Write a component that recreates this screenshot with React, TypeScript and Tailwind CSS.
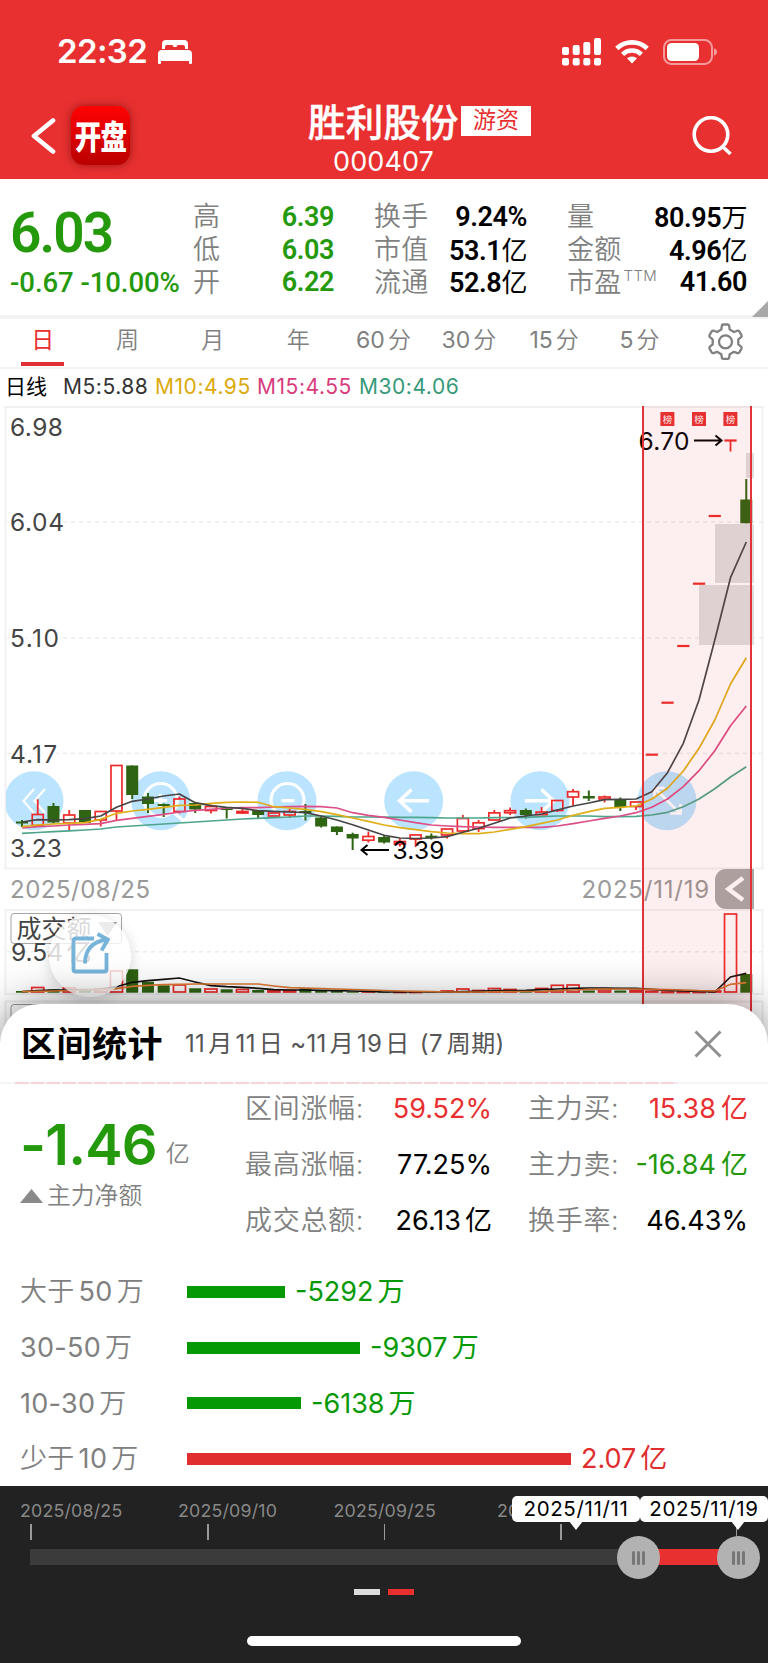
// ─── Chart constants ─────────────────────────────────────────────────────
const STEP = 15.745;
const X0 = 22;
const RED = "#ee2b2b";
const GREEN = "#2f6412";

const cx = (i: number) => X0 + i * STEP;

// direction, high, body top, body bottom, low
type Candle = ["r" | "g", number, number, number, number];

const CANDLES: Candle[] = [
  ["g", 820, 821.5, 823.5, 827],
  ["r", 799.3, 814.5, 825.5, 825.5],
  ["g", 803, 806, 822.5, 823.5],
  ["r", 810, 815, 823, 830],
  ["g", 810, 810, 823, 823],
  ["r", 811.5, 811.5, 820, 826.5],
  ["r", 765.5, 765.5, 811, 821],
  ["g", 765.5, 765.5, 795, 799],
  ["g", 793, 796.5, 804, 813],
  ["g", 803.5, 804, 806, 817],
  ["r", 796.5, 799, 811.5, 813.5],
  ["g", 803, 803, 809.5, 813],
  ["r", 804.5, 806.5, 810.5, 813.5],
  ["g", 808, 808.5, 810, 818.5],
  ["r", 808.7, 811.5, 813, 814],
  ["g", 810, 810, 815, 818.5],
  ["r", 813, 813, 816, 816],
  ["r", 809, 811.5, 815, 818],
  ["g", 804, 811, 813, 820.5],
  ["g", 816.5, 817.5, 826.5, 827.5],
  ["g", 826.5, 826.5, 832, 835],
  ["g", 832.7, 834, 838.5, 850],
  ["r", 831.5, 836.5, 840.2, 842.5],
  ["g", 835.7, 837, 842.5, 843.5],
  ["r", 838.5, 841.5, 844, 846.5],
  ["r", 835, 835, 839, 847],
  ["g", 833.5, 835.7, 838, 839.5],
  ["r", 829, 829, 835, 838.5],
  ["r", 815, 818.5, 831, 831],
  ["r", 820, 822.8, 828.6, 832],
  ["r", 810, 812.9, 820, 820],
  ["r", 807.5, 810.7, 812.8, 815],
  ["g", 808.5, 810, 815, 818.5],
  ["r", 807, 812, 814.7, 815],
  ["r", 800.5, 800.5, 810.5, 812],
  ["r", 789, 791.7, 797, 805.5],
  ["g", 790.5, 796, 798.5, 801],
  ["r", 795.5, 797, 799, 802.5],
  ["g", 797.5, 799.7, 807, 811],
  ["r", 801.5, 802, 806.5, 810],
  ["r", 754.7, 754.2, 755.2, 754.7],
  ["r", 702.7, 702.2, 703.2, 702.7],
  ["r", 646, 645.5, 646.5, 646],
  ["r", 583.7, 583.2, 584.2, 583.7],
  ["r", 516, 515.5, 516.5, 516],
  ["r", 440.5, 440, 441, 451.5],
  ["g", 479, 499.5, 523.3, 523.3],
];

const MA5 = [822, 819.7, 820, 819.7, 818.7, 816, 807.3, 801.3, 799, 796, 794, 802.7, 805.7, 807.3, 808.3, 810.7, 811.3, 812, 812.7, 816, 820, 824.7, 830, 835.3, 838, 838.5, 838, 836.7, 832.3, 828.3, 823.3, 818, 816, 814, 810, 806, 803, 799.7, 799.3, 799, 791.7, 772.7, 743.3, 700, 640, 577.7, 542];
const MA10 = [826.7, 825, 824, 823.3, 822.7, 819.3, 813.3, 811, 809.3, 807.3, 805.3, 805, 803.3, 802.3, 802, 802.3, 806.7, 808, 809.3, 811.7, 814.7, 818, 821.3, 825, 827.7, 829.7, 831.7, 833, 833.7, 833.7, 832, 829.3, 826.7, 823.3, 820, 815.3, 811.7, 808.3, 807.3, 806, 799, 788.3, 771, 748.3, 720, 684, 657.7];
const MA15 = [828, 826.7, 826, 825, 824.3, 823.7, 820.3, 818.3, 816.3, 814.3, 812, 810.3, 809.3, 808, 807.7, 807.7, 807, 806.7, 806.3, 806.7, 808, 812.7, 815.3, 817.3, 820, 822.7, 825, 826, 826.7, 827, 827.3, 827.3, 827.3, 827.3, 826, 823.7, 821, 818.3, 816, 812.7, 807.3, 799, 786.7, 770.7, 750.7, 725.7, 706];
const MA30 = [833.3, 832.5, 831.7, 830.8, 830, 829, 827, 826, 825, 824, 823, 822, 821, 820, 819, 818.3, 817.7, 817, 816, 816, 816.3, 817, 817, 817.2, 817.3, 817.3, 817.6, 818, 818, 818, 817.7, 817.5, 817.3, 816.6, 816, 816, 816, 816.7, 816.7, 816.3, 815, 812.3, 806.7, 799, 788.7, 777, 766.7];

const VOL_TOP = [991, 987.5, 989.5, 988, 989.5, 989, 971, 969.3, 981.7, 985.3, 985, 988.3, 989, 989.3, 989.5, 990, 990.5, 990.5, 988.3, 990, 991, 991.5, 991.5, 992, 992, 992, 992, 991, 989, 990.5, 988.5, 989.5, 991.5, 988.5, 985.3, 985, 990.5, 990, 990.5, 990.5, 991.3, 992, 992, 992, 991, 914, 974];
const VOL_MA5 = [991.7, 990.5, 990, 990, 989.7, 989.3, 986.7, 982.3, 980.7, 979.3, 978, 982, 985.7, 986.7, 987.3, 988.3, 989.7, 990, 990, 990.3, 990.7, 991, 991.3, 992, 992, 992, 992, 992, 991.7, 991.3, 990.7, 990.5, 990.3, 989.7, 989, 988.3, 988, 988, 988.3, 988.3, 989.3, 990.3, 991, 991.3, 992, 977, 973.3];
const VOL_MA10 = [991.7, 991.3, 991, 990.5, 990, 989.7, 988.7, 986.3, 985.3, 984.7, 984.3, 984, 984, 984, 984, 984, 986, 987.7, 988, 988.5, 989, 989.5, 990, 990.5, 991, 991.3, 991.6, 992, 992, 992, 991.8, 991.7, 991.5, 991.3, 990.7, 990, 989.3, 989.2, 989, 989, 989.3, 989.7, 990, 990.7, 991, 984.3, 982.7];

const NAV_X = [34, 160.7, 287, 413.7, 540, 667];

function toPoints(values: number[]) {
  return values.map((v, i) => `${cx(i).toFixed(1)},${v}`).join(" ");
}

// ─── Header ──────────────────────────────────────────────────────────────
function Header() {
  return (
    <header className="h-[179px] bg-[#e83030] text-white">
      <div className="flex h-[103px] items-center justify-between pr-[51px] pl-[57px]">
        <div className="flex items-center gap-[11px]">
          <span className="w-[90px] text-[33px] leading-none font-semibold tracking-[-0.6px]">22:32</span>
          <svg width="34" height="24" viewBox="0 0 34 24" fill="#fff">
            <path d="M4 9V4a4 4 0 0 1 4-4h18a4 4 0 0 1 4 4v5h-3V7a2 2 0 0 0-2-2h-4.500a2 2 0 0 0-2 2v0h-3v0a2 2 0 0 0-2-2H9a2 2 0 0 0-2 2v2Z" />
            <path d="M0 14a4 4 0 0 1 4-4h26a4 4 0 0 1 4 4v9a1 1 0 0 1-1 1h-1a1 1 0 0 1-1-1v-2H3v2a1 1 0 0 1-1 1H1a1 1 0 0 1-1-1Z" />
          </svg>
        </div>
        <div className="flex items-center gap-[14px]">
          <svg width="39" height="28" viewBox="0 0 39 28" fill="#fff">
            <rect x="0" y="9" width="7" height="8" rx="2" />
            <rect x="10.700" y="7" width="7" height="10" rx="2" />
            <rect x="21.300" y="4" width="7" height="13" rx="2" />
            <rect x="32" y="0" width="7" height="17" rx="2" />
            <rect x="0" y="20" width="7" height="7.500" rx="2" />
            <rect x="10.700" y="20" width="7" height="7.500" rx="2" />
            <rect x="21.300" y="20" width="7" height="7.500" rx="2" />
            <rect x="32" y="20" width="7" height="7.500" rx="2" />
          </svg>
          <svg width="34" height="25" viewBox="0 0 34 25" fill="none" stroke="#fff" strokeWidth="4.600">
            <path d="M1.800 9.500a22 22 0 0 1 30.400 0" />
            <path d="M7.600 15.300a13.700 13.700 0 0 1 18.800 0" />
            <path d="M17 24.500 12 19.300a7.500 7.500 0 0 1 10 0Z" fill="#fff" stroke="none" />
          </svg>
          <svg width="54" height="26" viewBox="0 0 54 26">
            <rect x="1" y="1" width="48" height="24" rx="7.500" fill="none" stroke="#f49a9a" strokeWidth="2" />
            <rect x="4" y="4" width="32" height="18" rx="4.500" fill="#fff" />
            <path d="M51 9.300q3 1 3 3.700t-3 3.700Z" fill="#f49a9a" />
          </svg>
        </div>
      </div>
      <div className="grid h-[76px] grid-cols-[308px_1fr_76px]">
        <div className="flex items-start gap-[15px] pt-[3px] pl-[30px]">
          <svg className="mt-[12px]" width="26" height="36" viewBox="0 0 26 36" fill="none" stroke="#fff" strokeWidth="4.600" strokeLinecap="round" strokeLinejoin="round">
            <path d="M23 2.500 4 18l19 15.500" />
          </svg>
          <div className="flex size-[59px] items-center justify-center rounded-[13px] bg-linear-to-b from-[#ff0202] to-[#b90000] shadow-[0_0_8px_rgba(90,0,0,0.55)]">
            <span className="mt-[4px] scale-y-[1.24] text-[26.500px] leading-none font-black tracking-[-0.800px]">开盘</span>
          </div>
        </div>
        <div>
          <div className="flex items-start">
            <h1 className="w-[153px] text-[37.500px] leading-[39px] font-medium tracking-[0.200px] whitespace-nowrap [-webkit-text-stroke:0.4px_#fff]">胜利股份</h1>
            <span className="mt-[3px] h-[30px] w-[70px] bg-white text-center text-[23px] leading-[29px] text-[#e83030]">游资</span>
          </div>
          <div className="mt-[6px] pl-[25px] text-[27px] leading-[28px] tracking-[0.1px]">000407</div>
        </div>
        <svg className="mt-[13px] mr-[35px] ml-[-77px] justify-self-end" width="41" height="41" viewBox="0 0 41 41" fill="none" stroke="#fff" strokeWidth="3.600">
          <circle cx="19" cy="18.500" r="16.800" />
          <path d="M30.500 30.500 38.500 38" />
        </svg>
      </div>
    </header>
  );
}

// ─── Quote summary ───────────────────────────────────────────────────────
interface QuoteRow {
  label: string;
  value: string;
  unit?: string;
  sup?: string;
}

function QuoteColumn({ rows, green }: { rows: QuoteRow[]; green?: boolean }) {
  return (
    <dl className="flex flex-col pt-[22px]">
      {rows.map((r) => (
        <div key={r.label} className="flex h-[32.700px] items-center justify-between whitespace-nowrap">
          <dt className="-mt-px text-[27px] leading-none font-[350] tracking-[0.3px] text-[#808080]">
            {r.label}
            {r.sup && <sup className="top-[-11px] ml-[2px] text-[15px] tracking-[0.3px]">{r.sup}</sup>}
          </dt>
          <dd className={green ? "font-[Roboto] text-[27px] leading-none font-semibold tracking-[-0.4px] text-[#24990c]" : "font-[Roboto] text-[27px] leading-none font-semibold tracking-[-0.4px] text-black"}>
            {r.value}
            {r.unit && <span className="font-['Noto_Sans_CJK_SC'] text-[26px] leading-none font-normal">{r.unit}</span>}
          </dd>
        </div>
      ))}
    </dl>
  );
}

function Quote() {
  return (
    <section className="relative grid h-[136px] grid-cols-[193px_141px_153px_180px] bg-white">
      <div className="pl-[10px] font-[Roboto] text-[#24990c]">
        <div className="mt-[26px] text-[55px] leading-[56px] font-semibold tracking-[-1.900px]">6.03</div>
        <div className="mt-[7px] text-[27.500px] leading-[30px] font-medium tracking-[-0.05px] whitespace-nowrap">-0.67 -10.00%</div>
      </div>
      <QuoteColumn green rows={[{ label: "高", value: "6.39" }, { label: "低", value: "6.03" }, { label: "开", value: "6.22" }]} />
      <div className="ml-[40px] w-[153px]">
        <QuoteColumn
          rows={[
            { label: "换手", value: "9.24%" },
            { label: "市值", value: "53.1", unit: "亿" },
            { label: "流通", value: "52.8", unit: "亿" },
          ]}
        />
      </div>
      <div className="ml-[80px] w-[180px]">
        <QuoteColumn
          rows={[
            { label: "量", value: "80.95", unit: "万" },
            { label: "金额", value: "4.96", unit: "亿" },
            { label: "市盈", sup: "TTM", value: "41.60" },
          ]}
        />
      </div>
      <svg className="absolute right-0 bottom-[-2px]" width="16" height="16" viewBox="0 0 16 16">
        <path d="M16 0v16H0Z" fill="#a8a8a8" />
      </svg>
    </section>
  );
}

// ─── Period tabs + moving average legend ─────────────────────────────────
const PERIODS = ["日", "周", "月", "年", "60分", "30分", "15分", "5分"];

function Tabs() {
  return (
    <nav className="grid h-[52px] grid-cols-9 border-t-4 border-[#f2f2f2] bg-white">
      {PERIODS.map((p, i) => {
        const num = p.replace("分", "");
        return (
          <div key={p} className={i === 0 ? "relative text-center text-[23px] leading-[42px] text-[#e83030]" : "pr-px text-center text-[23px] leading-[42px] font-[350] text-[#808080]"}>
            {p.endsWith("分") ? (
              <>
                <span className="font-normal">{num}</span>
                <span className="ml-[3px]">分</span>
              </>
            ) : (
              p
            )}
            {i === 0 && <span className="absolute bottom-px left-[21px] h-1 w-[43px] bg-[#e03137]" />}
          </div>
        );
      })}
      <svg className="mt-[4px] ml-[24px]" width="37" height="37" viewBox="0 0 37 37" fill="none" stroke="#808080" strokeWidth="2.300" strokeLinejoin="round">
        <path d="M14.300 6.500 14.800 3Q15 1.500 16.300 1.500h4.400Q22 1.500 22.200 3l.5 3.500 4.300 2.500 3.300-1.300q1.300-.4 2 .7l2.200 3.800q.6 1.200-.4 2l-2.800 2.200v5l2.800 2.200q1 .8.4 2l-2.200 3.800q-.7 1.100-2 .7L27 28.800l-4.300 2.500-.5 3q-.2 1.500-1.500 1.500h-4.400q-1.300 0-1.500-1.500l-.5-3L10 28.800l-3.300 1.300q-1.300.4-2-.7l-2.200-3.800q-.6-1.200.4-2l2.800-2.200v-5l-2.800-2.200q-1-.8-.4-2l2.200-3.800q.7-1.100 2-.7L10 9Z" />
        <circle cx="18.500" cy="18.800" r="6.500" />
      </svg>
    </nav>
  );
}

function MaLegend() {
  return (
    <div className="flex h-[37px] items-center border-t-2 border-[#f3f3f3] bg-white pb-px pl-[5px] text-[21px] leading-none tracking-[0.550px] whitespace-nowrap">
      <span className="w-[58px] tracking-[-0.1px] text-black">日线</span>
      <span className="w-[92px] text-[#333]">M5:5.88</span>
      <span className="w-[102px] text-[#dcaa0c]">M10:4.95</span>
      <span className="w-[102px] text-[#d83c7c]">M15:4.55</span>
      <span className="text-[#36997a]">M30:4.06</span>
    </div>
  );
}

// ─── Price chart ─────────────────────────────────────────────────────────
function NavIcons() {
  return (
    <g fill="none" stroke="#fff" strokeWidth="3.200">
      {/* fast backward */}
      <path d="M34 789 23.500 801l10.500 12M45 789 34.500 801 45 813" strokeWidth="2.200" />
      {/* zoom in */}
      <circle cx="160.700" cy="800" r="16.500" />
      <path d="M173 812l12 10M154 800.500h13M160.500 794v13" />
      {/* zoom out */}
      <circle cx="287.500" cy="800" r="16.500" />
      <path d="M281.500 800.700h13M299 812l7 7" />
      <path d="M429 800.700h-29M411.500 789.500 399.500 800.700l12 11.200" strokeWidth="3.600" />
      <path d="M525 800.700h29M541.500 789.500l12 11.200-12 11.200" strokeWidth="3.600" />
      <path d="M656 789.500l23 23M654.500 798v-10h10M680.500 804v9.500h-10" strokeWidth="2.600" />
    </g>
  );
}

function PriceChart() {
  return (
    <svg className="block" width="768" height="466" viewBox="0 404 768 466" fontFamily="Inter, 'Noto Sans CJK SC', sans-serif">
      <rect x="5.500" y="407" width="757" height="461.500" fill="#fff" stroke="#f1f1f1" strokeWidth="2" />
      {[522, 638, 753.5].map((y) => (
        <line key={y} x1="7" x2="762" y1={y} y2={y} stroke="#ececec" strokeWidth="1.400" strokeDasharray="4 4" />
      ))}

      <clipPath id="plot">
        <rect x="6" y="406" width="757" height="463" />
      </clipPath>
      <g clipPath="url(#plot)">
        {NAV_X.map((x) => (
          <circle key={x} cx={x} cy="800.700" r="29.500" fill="#bae4ff" />
        ))}
        <NavIcons />
      </g>

      {/* unfilled gaps */}
      <g fill="#dfdfdf">
        <rect x="746" y="453" width="8" height="25" />
        <rect x="715" y="524" width="39" height="59" />
        <rect x="699" y="585" width="55" height="60" />
      </g>

      {CANDLES.map(([dir, high, top, bottom, low], i) => {
        const x = cx(i);
        if (dir === "g") {
          return (
            <g key={i} fill={GREEN}>
              <rect x={x - 1} y={high} width="2" height={low - high} />
              <rect x={x - 6} y={top} width="12" height={bottom - top} />
            </g>
          );
        }
        return (
          <g key={i} fill="none" stroke={RED} strokeWidth="1.800">
            <path d={`M${x} ${high}V${top}M${x} ${bottom}V${low}`} />
            <rect x={x - 5.5} y={top} width="11" height={bottom - top} strokeWidth={i >= 40 ? 1.2 : 1.7} />
          </g>
        );
      })}

      <g fill="none" strokeWidth="1.700" strokeLinejoin="round">
        <polyline points={toPoints(MA30)} stroke="#4da58b" />
        <polyline points={toPoints(MA15)} stroke="#dc4f88" />
        <polyline points={toPoints(MA10)} stroke="#dfae18" />
        <polyline points={toPoints(MA5)} stroke="#464646" />
      </g>

      <g fontSize="24.500" fill="#444">
        <g stroke="#fff" strokeWidth="5" paintOrder="stroke">
          <text x="10" y="436" textLength="53">6.98</text>
          <text x="10" y="531" textLength="54">6.04</text>
          <text x="10" y="647" textLength="49">5.10</text>
          <text x="10" y="762.500" textLength="47">4.17</text>
        </g>
        <text x="10" y="857" textLength="52">3.23</text>
      </g>
      <g fontSize="24.500" fill="#000">
        <text x="638.500" y="449.500" textLength="51">6.70</text>
        <text x="392.500" y="859" textLength="52">3.39</text>
      </g>
      <g fill="none" stroke="#000" strokeWidth="2">
        <path d="M694 440.500h27M715.500 435.500l6 5-6 5" />
        <path d="M389 850h-27M367.500 845l-6 5 6 5" />
      </g>

      {[667.4, 699, 730.4].map((x) => (
        <g key={x}>
          <rect x={x - 7} y="412" width="14" height="14" fill="#e83030" />
          <text x={x} y="422.700" fontSize="9.500" fill="#fff" textAnchor="middle">榜</text>
        </g>
      ))}
    </svg>
  );
}

function DateRow() {
  return (
    <div className="flex h-[38px] items-center bg-white pl-[10px] text-[24px] leading-none text-[#999]">
      <span className="pt-[2px] tracking-[0.500px]">2025/08/25</span>
      <span className="mr-[5px] ml-auto pt-[2px] tracking-[0.800px]">2025/11/19</span>
      <span className="mr-[14px] flex h-10 w-[39px] items-center justify-center rounded-l-[11px] bg-[#aaa9a9]">
        <svg width="20" height="26" viewBox="0 0 20 26" fill="none" stroke="#fff" strokeWidth="4.500">
          <path d="M18 2 3.500 13 18 24" />
        </svg>
      </span>
    </div>
  );
}

// ─── Volume chart ────────────────────────────────────────────────────────
function VolumeChart() {
  return (
    <svg className="block" width="768" height="132" viewBox="0 908 768 132" fontFamily="Inter, 'Noto Sans CJK SC', sans-serif">
      <rect x="5.500" y="910" width="757" height="84" fill="#fff" stroke="#f1f1f1" strokeWidth="2" />
      <line x1="7" x2="762" y1="951.700" y2="951.700" stroke="#ececec" strokeWidth="1.400" strokeDasharray="4 4" />
      <rect x="5.500" y="1001.500" width="757" height="60" fill="#fff" stroke="#eee" strokeWidth="2" />
      <rect x="11" y="1004.500" width="110" height="30" rx="3" fill="none" stroke="#999" />

      <rect x="11" y="913.500" width="110.500" height="30" rx="3" fill="#fff" stroke="#a5a5a5" />
      <g fontSize="24.500" fill="#444">
        <text x="16.500" y="937.500" fontSize="25">成交额</text>
        <text x="11" y="961">9.54</text>
        <text x="66.500" y="961" fontSize="25">亿</text>
      </g>
      <path d="M98 922h19l-9.500 14Z" fill="#9a9a9a" />

      {VOL_TOP.map((top, i) => {
        const x = cx(i);
        const h = 992.7 - top;
        if (CANDLES[i][0] === "g") {
          return <rect key={i} x={x - 6} y={top} width="12" height={h} fill={GREEN} />;
        }
        return <rect key={i} x={x - 6} y={top} width="12" height={Math.max(h - 0.7, 0.5)} fill="none" stroke={RED} strokeWidth="1.700" />;
      })}
      <g fill="none" strokeWidth="1.700">
        <polyline points={toPoints(VOL_MA5)} stroke="#111" />
        <polyline points={toPoints(VOL_MA10)} stroke="#e07b35" />
      </g>
    </svg>
  );
}

function ShareButton() {
  return (
    <button className="absolute top-[511px] left-[49px] flex size-[82px] items-center justify-center rounded-full bg-white/80 shadow-[0_3px_14px_rgba(0,0,0,0.16)]">
      <svg className="mb-[7px]" width="40" height="42" viewBox="0 0 40 42" fill="none" stroke="#76b4d9" strokeWidth="3.800">
        <path d="M24 6.500H5.500a2 2 0 0 0-2 2v29a2 2 0 0 0 2 2h29a2 2 0 0 0 2-2V21" />
        <path d="M15 31.500Q15 11 36.500 7.500M27.500 2l10.500 5.500-6.500 11" />
      </svg>
    </button>
  );
}

// ─── Range statistics sheet ──────────────────────────────────────────────
const STATS = [
  ["区间涨幅:", "59.52%", "", "text-[#e83030]", "主力买:", "15.38", "亿", "text-[#e83030]"],
  ["最高涨幅:", "77.25%", "", "text-black", "主力卖:", "-16.84", "亿", "text-[#24990c]"],
  ["成交总额:", "26.13", "亿", "text-black", "换手率:", "46.43%", "", "text-black"],
];

interface FlowBar {
  parts: [string, string];
  width: number;
  value: string;
  unit: string;
  up?: boolean;
}

const FLOWS: FlowBar[] = [
  { parts: ["大于", "50"], width: 98, value: "-5292", unit: "万" },
  { parts: ["", "30-50"], width: 173, value: "-9307", unit: "万" },
  { parts: ["", "10-30"], width: 114, value: "-6138", unit: "万" },
  { parts: ["少于", "10"], width: 384, value: "2.07", unit: "亿", up: true },
];

function RangeSheet() {
  return (
    <section className="relative z-10 -mt-[36px] h-[482px] rounded-t-[40px] bg-white shadow-[0_0_44px_rgba(0,0,0,0.48)]">
      <div className="flex h-[78px] items-center pt-px pr-[46px] pl-[21px]">
        <h2 className="w-[164px] pt-px text-[35px] leading-none font-bold tracking-[0.5px] whitespace-nowrap text-black">区间统计</h2>
        <p className="pt-px text-[24px] leading-none tracking-[0.350px] whitespace-nowrap text-[#555]">
          11<span className="mx-[3px]">月</span>11<span className="ml-[3px]">日</span>
          <span className="ml-[7px]">~11</span>
          <span className="mx-[3px]">月</span>19<span className="mx-[3px]">日</span> (7<span className="ml-[4px]">周期</span>)
        </p>
        <svg className="ml-auto" width="28" height="28" viewBox="0 0 28 28" stroke="#909090" strokeWidth="3">
          <path d="M1.500 1.500 26.500 26.500M26.500 1.500 1.500 26.500" />
        </svg>
      </div>
      <svg className="block" width="768" height="2" viewBox="0 0 768 2">
        <path d="M0 1H768" stroke="#f5f5f5" strokeWidth="2" />
        <path d="M15 1H677" stroke="#f6d4d6" strokeWidth="2" strokeDasharray="13.700 2.045" />
      </svg>

      <div className="flex h-[180px]">
        <div className="w-[245px] pl-[20px]">
          <div className="mt-[32px] flex items-start text-[#24990c]">
            <span className="text-[56px] leading-[58px] font-semibold tracking-[-0.800px]">-1.46</span>
            <span className="mt-[26px] ml-[9px] text-[24px] leading-none font-[350] text-[#808080]">亿</span>
          </div>
          <div className="mt-[8px] flex items-center gap-[4px] text-[23.800px] leading-[28px] font-[350] text-[#808080]">
            <svg width="23" height="14" viewBox="0 0 23 14">
              <path d="M11.500 0 23 14H0Z" fill="#8a8a8a" />
            </svg>
            主力净额
          </div>
        </div>
        <div className="-mt-[3px] flex-1 pr-[20px]">
          {STATS.map(([l1, v1, u1, c1, l2, v2, u2, c2]) => (
            <div key={l1} className="flex h-[55.700px] items-center text-[27px] leading-none whitespace-nowrap">
              <span className="font-[350] tracking-[0.700px] text-[#808080]">{l1}</span>
              <span className={`ml-auto ${c1}`}>
                {v1}
                {u1 && <span className="ml-[4px]">{u1}</span>}
              </span>
              <span className="ml-[36px] w-[93px] font-[350] tracking-[0.700px] text-[#808080]">{l2}</span>
              <span className={`w-[127px] text-right ${c2}`}>
                {v2}
                {u2 && <span className="ml-[5px]">{u2}</span>}
              </span>
            </div>
          ))}
        </div>
      </div>

      <div>
        {FLOWS.map((f) => (
          <div key={f.parts[1]} className="flex h-[55.700px] items-center pl-[20px] text-[27px] leading-none whitespace-nowrap">
            <span className="w-[167px] font-[350] tracking-[0.300px] text-[#808080]">
              {f.parts[0]}
              <span className={f.parts[0] ? "mx-[4px] font-normal" : "mr-[4px] font-normal"}>{f.parts[1]}</span>万
            </span>
            <span className={f.up ? "h-3 bg-[#e02d2d]" : "h-3 bg-[#059a05]"} style={{ width: f.width }} />
            <span className={f.up ? "ml-[10px] text-[#e02d2d]" : "ml-[10px] text-[#059a05]"}>
              {f.value}
              <span className="ml-[4px]">{f.unit}</span>
            </span>
          </div>
        ))}
      </div>
    </section>
  );
}

// ─── Range slider footer ─────────────────────────────────────────────────
const TICKS = [
  { date: "2025/08/25", cell: "w-[207px]", label: "pl-[20px]", tick: "ml-[30px]" },
  { date: "2025/09/10", cell: "w-[176.500px]", label: "-ml-[29px]", tick: "" },
  { date: "2025/09/25", cell: "w-[176.500px]", label: "-ml-[50px]", tick: "" },
  { date: "2025/10/20", cell: "w-[176.500px]", label: "-ml-[63px]", tick: "" },
];

function Knob({ className }: { className: string }) {
  return (
    <span className={`absolute top-[50px] flex size-[43px] items-center justify-center gap-[2.500px] rounded-full bg-[#b2b2b2] ${className}`}>
      <i className="h-[14px] w-[2.500px] rounded bg-[#777]" />
      <i className="h-[14px] w-[2.500px] rounded bg-[#777]" />
      <i className="h-[14px] w-[2.500px] rounded bg-[#777]" />
    </span>
  );
}

function DateBubble({ date, className, tip }: { date: string; className: string; tip: string }) {
  return (
    <div className={`absolute top-[10px] h-[26px] w-[128px] rounded-[5px] bg-white text-center text-[20.500px] leading-[26px] tracking-[0.650px] text-black ${className}`}>
      {date}
      <svg className={`absolute top-[25px] ${tip}`} width="14" height="9" viewBox="0 0 14 9">
        <path d="M0 0h14L7 9Z" fill="#fff" />
      </svg>
    </div>
  );
}

function RangeSlider() {
  return (
    <footer className="relative z-20 h-[177px] bg-[#222]">
      <div className="flex pt-[14px] text-[17.800px] leading-[21px] tracking-[0.200px] text-[#888]">
        {TICKS.map((t) => (
          <div key={t.date} className={t.cell}>
            <div className={t.label}>{t.date}</div>
            <div className={`mt-[3px] h-4 w-[1.500px] bg-[#999] ${t.tick}`} />
          </div>
        ))}
        <div className="mt-[24px] -ml-px h-4 w-[1.500px] bg-[#999]" />
      </div>
      <div className="mt-[9px] ml-[30px] h-4 w-[708px] bg-[#3b3b3b]">
        <div className="ml-auto h-4 w-[100px] bg-[#e83030]" />
      </div>
      <div className="mt-[24px] flex justify-center gap-2">
        <span className="h-[6px] w-[26px] bg-[#dcdcdc]" />
        <span className="h-[6px] w-[26px] bg-[#e83030]" />
      </div>
      <div className="mx-auto mt-[41px] h-[10px] w-[274px] rounded-full bg-white" />
      <DateBubble date="2025/11/11" className="left-[512px]" tip="left-[57px]" />
      <DateBubble date="2025/11/19" className="left-[640px]" tip="left-[91px]" />
      <Knob className="left-[617px]" />
      <Knob className="left-[717px]" />
    </footer>
  );
}

export default function App() {
  return (
    <div className="h-[1663px] w-[768px] overflow-hidden bg-white font-[Inter,'Noto_Sans_CJK_SC',sans-serif]">
      <Header />
      <Quote />
      <Tabs />
      <MaLegend />
      <div className="relative">
        <PriceChart />
        <DateRow />
        <VolumeChart />
        {/* selected interval */}
        <div className="absolute top-[2px] bottom-0 left-[642px] w-[110px] border-x-2 border-[#e23338] bg-[#e83030]/8" />
        <ShareButton />
      </div>
      <RangeSheet />
      <RangeSlider />
    </div>
  );
}
